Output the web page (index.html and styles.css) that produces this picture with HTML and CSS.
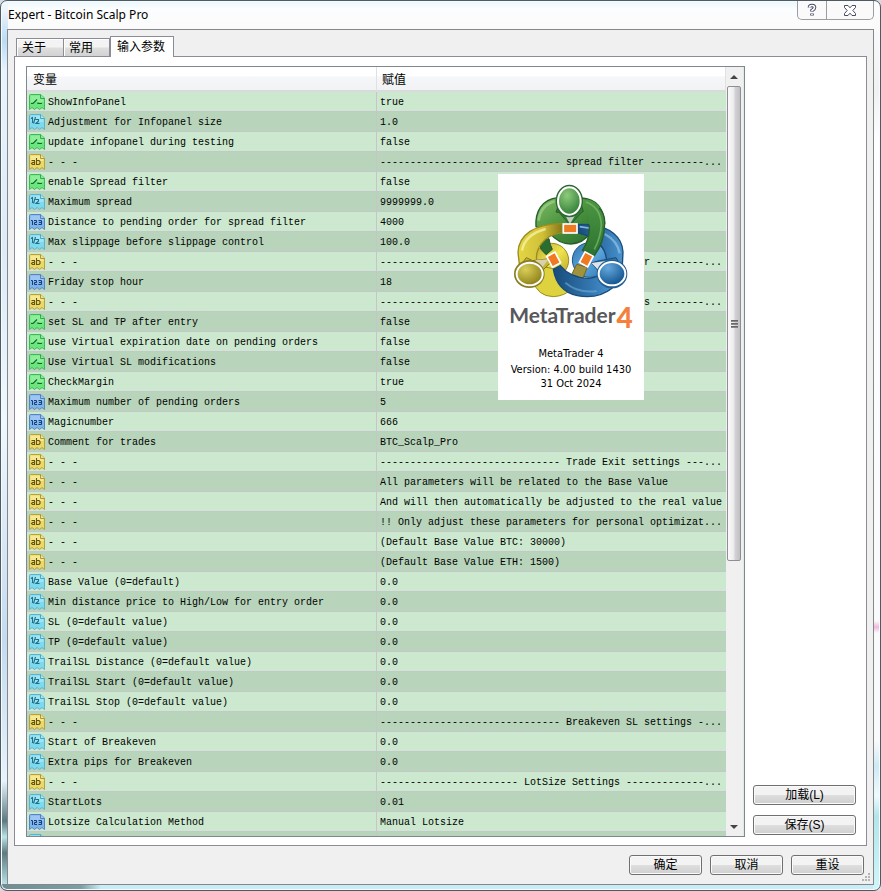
FILE: index.html
```html
<!DOCTYPE html>
<html lang="zh-CN">
<head>
<meta charset="utf-8">
<title>Expert - Bitcoin Scalp Pro</title>
<link rel="stylesheet" href="styles.css">
</head>
<body>
<svg class="sprites" width="0" height="0" aria-hidden="true">
  <symbol id="bool" viewBox="0 0 16 16">
    <path d="M.5 1.5q0-1 1-1H11.500L15.500 4V15.500L13 13.500 10.500 15.500 8 13.500 5.500 15.500 3 13.500 .5 15.500Z" fill="#6de57f" stroke="#3fb75a"/>
    <path d="M1.500 1.500H11L14.500 5V8H1.500Z" fill="#a5f5ac" opacity=".6"/>
    <path d="M11.500 .5V4.500H15.500" fill="#8ceb98" stroke="#35a64e"/>
    <path d="M2 9.500H4L8 5.500M9 8.500V9.500H13" fill="none" stroke="#14692a" stroke-width="1.200"/>
  </symbol>
  <symbol id="real" viewBox="0 0 16 16">
    <path d="M.5 1.500q0-1 1-1H11.500L15.500 4V15.500L13 13.500 10.500 15.500 8 13.500 5.500 15.500 3 13.500 .5 15.500Z" fill="#7fd9ec" stroke="#5bb2cd"/>
    <path d="M1.500 1.500H11L14.500 5V8H1.500Z" fill="#b4ecf7" opacity=".6"/>
    <path d="M11.500 .5V4.500H15.500" fill="#a4e6f2" stroke="#4ea5c4"/>
    <path d="M2 4.500L3.500 3.500V9M6.500 3L4.500 9.500M6.500 5.500H9.500V7L7 9.500H10.500" fill="none" stroke="#1d6f8c" stroke-width="1.100"/>
  </symbol>
  <symbol id="int" viewBox="0 0 16 16">
    <path d="M.5 1.500q0-1 1-1H11.500L15.500 4V15.500L13 13.500 10.500 15.500 8 13.500 5.500 15.500 3 13.500 .5 15.500Z" fill="#80b5ea" stroke="#5585c6"/>
    <path d="M1.500 1.500H11L14.500 5V7H1.500Z" fill="#b0d3f7" opacity=".6"/>
    <path d="M11.500 .5V4.500H15.500" fill="#a2c8f2" stroke="#4f7fc0"/>
    <path d="M2 6.500H3.500V11M5 6.500H7.500V8.500H5.500V10.500H8M9.500 6.500H12.500V10.500H9.500M10 8.500H12" fill="none" stroke="#173e7c"/>
  </symbol>
  <symbol id="str" viewBox="0 0 16 16">
    <path d="M.5 1.500q0-1 1-1H11.500L15.500 4V15.500L13 13.500 10.500 15.500 8 13.500 5.500 15.500 3 13.500 .5 15.500Z" fill="#ead968" stroke="#b9a03b"/>
    <path d="M1.500 1.500H11L14.500 5V7H1.500Z" fill="#faf0a8" opacity=".7"/>
    <path d="M11.500 .5V4.500H15.500" fill="#f3e690" stroke="#b0952f"/>
    <path d="M2.500 6.500H5.500V11M5.500 8.500H3.500L2.500 9.500 3.500 10.500H5.500M7.500 4V10.500H10L11 9.500V7.500L10 6.500H7.500" fill="none" stroke="#665512" stroke-width="1.100"/>
  </symbol>
</svg>

<div class="window">
  <header class="titlebar">
    <h1>Expert - Bitcoin Scalp Pro</h1>
    <div class="caption">
      <button class="help" aria-label="Help"><svg width="10" height="14" viewBox="0 0 10 14"><path d="M2.500 4.500Q2.500 2.500 5 2.500T7.500 4.500Q7.500 6 5 7.500V8.500M5 10.500V12.500" fill="none" stroke="#474b66" stroke-width="3.600"/><path d="M2.500 4.500Q2.500 2.500 5 2.500T7.500 4.500Q7.500 6 5 7.500V8M5 11V12" fill="none" stroke="#fff" stroke-width="1.600"/></svg></button>
      <button class="close" aria-label="Close"><svg width="12" height="11" viewBox="0 0 12 11"><path d="M.5 .5H4L6 2.800 8 .5H11.500V2.500L8.800 5.500 11.500 8.500V10.500H8L6 8.200 4 10.500H.5V8.500L3.200 5.500 .5 2.500Z" fill="#fff" stroke="#474b66"/></svg></button>
    </div>
  </header>

  <main class="client">
    <div class="tabs" role="tablist">
      <button class="tab" role="tab">关于</button>
      <button class="tab second" role="tab">常用</button>
      <button class="tab active" role="tab" aria-selected="true">输入参数</button>
    </div>

    <section class="panel">
      <div class="list">
        <div class="rows">
          <table>
            <colgroup><col class="name"><col></colgroup>
            <thead><tr><th>变量</th><th>赋值</th></tr></thead>
            <tbody>
              <tr><td><svg><use href="#bool"/></svg>ShowInfoPanel</td><td>true</td></tr>
              <tr><td><svg><use href="#real"/></svg>Adjustment for Infopanel size</td><td>1.0</td></tr>
              <tr><td><svg><use href="#bool"/></svg>update infopanel during testing</td><td>false</td></tr>
              <tr><td><svg><use href="#str"/></svg>- - -</td><td>------------------------------ spread filter ---------...</td></tr>
              <tr><td><svg><use href="#bool"/></svg>enable Spread filter</td><td>false</td></tr>
              <tr><td><svg><use href="#real"/></svg>Maximum spread</td><td>9999999.0</td></tr>
              <tr><td><svg><use href="#int"/></svg>Distance to pending order for spread filter</td><td>4000</td></tr>
              <tr><td><svg><use href="#real"/></svg>Max slippage before slippage control</td><td>100.0</td></tr>
              <tr><td><svg><use href="#str"/></svg>- - -</td><td><span>--------------------</span><span class="tail">r --------...</span></td></tr>
              <tr><td><svg><use href="#int"/></svg>Friday stop hour</td><td>18</td></tr>
              <tr><td><svg><use href="#str"/></svg>- - -</td><td><span>--------------------</span><span class="tail">s --------...</span></td></tr>
              <tr><td><svg><use href="#bool"/></svg>set SL and TP after entry</td><td>false</td></tr>
              <tr><td><svg><use href="#bool"/></svg>use Virtual expiration date on pending orders</td><td>false</td></tr>
              <tr><td><svg><use href="#bool"/></svg>Use Virtual SL modifications</td><td>false</td></tr>
              <tr><td><svg><use href="#bool"/></svg>CheckMargin</td><td>true</td></tr>
              <tr><td><svg><use href="#int"/></svg>Maximum number of pending orders</td><td>5</td></tr>
              <tr><td><svg><use href="#int"/></svg>Magicnumber</td><td>666</td></tr>
              <tr><td><svg><use href="#str"/></svg>Comment for trades</td><td>BTC_Scalp_Pro</td></tr>
              <tr><td><svg><use href="#str"/></svg>- - -</td><td>------------------------------ Trade Exit settings ---...</td></tr>
              <tr><td><svg><use href="#str"/></svg>- - -</td><td>All parameters will be related to the Base Value</td></tr>
              <tr><td><svg><use href="#str"/></svg>- - -</td><td>And will then automatically be adjusted to the real value</td></tr>
              <tr><td><svg><use href="#str"/></svg>- - -</td><td>!! Only adjust these parameters for personal optimizat...</td></tr>
              <tr><td><svg><use href="#str"/></svg>- - -</td><td>(Default Base Value BTC: 30000)</td></tr>
              <tr><td><svg><use href="#str"/></svg>- - -</td><td>(Default Base Value ETH: 1500)</td></tr>
              <tr><td><svg><use href="#real"/></svg>Base Value (0=default)</td><td>0.0</td></tr>
              <tr><td><svg><use href="#real"/></svg>Min distance price to High/Low for entry order</td><td>0.0</td></tr>
              <tr><td><svg><use href="#real"/></svg>SL (0=default value)</td><td>0.0</td></tr>
              <tr><td><svg><use href="#real"/></svg>TP (0=default value)</td><td>0.0</td></tr>
              <tr><td><svg><use href="#real"/></svg>TrailSL Distance (0=default value)</td><td>0.0</td></tr>
              <tr><td><svg><use href="#real"/></svg>TrailSL Start (0=default value)</td><td>0.0</td></tr>
              <tr><td><svg><use href="#real"/></svg>TrailSL Stop (0=default value)</td><td>0.0</td></tr>
              <tr><td><svg><use href="#str"/></svg>- - -</td><td>------------------------------ Breakeven SL settings -...</td></tr>
              <tr><td><svg><use href="#real"/></svg>Start of Breakeven</td><td>0.0</td></tr>
              <tr><td><svg><use href="#real"/></svg>Extra pips for Breakeven</td><td>0.0</td></tr>
              <tr><td><svg><use href="#str"/></svg>- - -</td><td>----------------------- LotSize Settings -------------...</td></tr>
              <tr><td><svg><use href="#real"/></svg>StartLots</td><td>0.01</td></tr>
              <tr><td><svg><use href="#int"/></svg>Lotsize Calculation Method</td><td>Manual Lotsize</td></tr>
              <tr><td><svg><use href="#real"/></svg></td><td></td></tr>
            </tbody>
          </table>
        </div>
        <div class="scrollbar">
          <span class="arrow up"></span>
          <div class="track"><div class="thumb"><i></i><i></i><i></i></div></div>
          <span class="arrow down"></span>
        </div>
      </div>
      <div class="side">
        <button class="btn">加载(L)</button>
        <button class="btn">保存(S)</button>
      </div>
    </section>

    <footer class="actions">
      <button class="btn">确定</button>
      <button class="btn">取消</button>
      <button class="btn">重设</button>
    </footer>
    <svg class="grip" width="10" height="10" viewBox="0 0 10 10" aria-hidden="true"><path d="M6 1h2M3 4h2M6 4h2M0 7h2M3 7h2M6 7h2" stroke="#b4b4b4" stroke-width="2"/></svg>
  </main>

  <aside class="about">
    <svg class="logo" width="125" height="125" viewBox="0 0 375 375" aria-hidden="true">
      <defs>
        <linearGradient id="g" x1="0" y1="0" x2="1" y2="1"><stop offset="0" stop-color="#82bd65"/><stop offset=".5" stop-color="#478f3d"/><stop offset="1" stop-color="#286a2d"/></linearGradient>
        <linearGradient id="y" x1="0" y1="0" x2="1" y2="1"><stop offset="0" stop-color="#b8a92c"/><stop offset=".5" stop-color="#efe350"/><stop offset="1" stop-color="#b8a622"/></linearGradient>
        <linearGradient id="b" x1="0" y1="0" x2="1" y2="1"><stop offset="0" stop-color="#2f74ae"/><stop offset=".5" stop-color="#5da6de"/><stop offset="1" stop-color="#2f74ae"/></linearGradient>
        <linearGradient id="ya" x1="0" y1="0" x2="1" y2="0"><stop offset="0" stop-color="#e3d745"/><stop offset=".55" stop-color="#d0c038"/><stop offset="1" stop-color="#857718"/></linearGradient>
        <linearGradient id="ba" x1="0" y1="0" x2="1" y2="0"><stop offset="0" stop-color="#174b7a"/><stop offset=".6" stop-color="#3275ae"/><stop offset="1" stop-color="#4a94cf"/></linearGradient>
        <linearGradient id="ga" x1="0" y1="0" x2="0" y2="1"><stop offset="0" stop-color="#4d9742"/><stop offset="1" stop-color="#2c7231"/></linearGradient>
        <radialGradient id="gh" cx=".4" cy=".3" r=".8"><stop offset="0" stop-color="#8ecb7b"/><stop offset="1" stop-color="#287630"/></radialGradient>
        <radialGradient id="yh" cx=".35" cy=".3" r=".8"><stop offset="0" stop-color="#d9cf59"/><stop offset="1" stop-color="#877812"/></radialGradient>
        <radialGradient id="bh" cx=".35" cy=".25" r=".8"><stop offset="0" stop-color="#65a8dc"/><stop offset="1" stop-color="#0e508b"/></radialGradient>
      </defs>
      <circle cx="125" cy="241" r="51" fill="url(#y)" stroke="#9c8c20" stroke-width="3"/>
      <path d="M68 300Q82 349 130 350 165 348 186 326L150 270 100 260Z" fill="#dfd23f" stroke="#9c8c20" stroke-width="3"/>
      <circle cx="239" cy="240" r="52" fill="url(#b)" stroke="#1b5587" stroke-width="3"/>
      <path d="M144 53C95 58 75 95 78 140L120 160Q145 191 182 192 220 190 240 160L284 130C280 80 255 57 215 54Z" fill="url(#g)" stroke="#255f2a" stroke-width="4"/>
      <path d="M88 180L93 208 108 224 127 208Q119 193 117 176Z" fill="#2a6d2f" stroke="#205726" stroke-width="3"/>
      <path d="M203 133L240 134C300 140 337 172 339 216L337 256 290 262Q294 212 262 186 240 166 206 159Z" fill="url(#ba)" stroke="#174b7a" stroke-width="4"/>
      <path d="M209 140L255 147" stroke="#87b4da" stroke-width="5"/>
      <path d="M284 162Q322 182 329 220" fill="none" stroke="#a1cbea" stroke-width="7" opacity=".6"/>
      <path d="M230 58C268 66 285 96 284 132 283 168 272 203 252 228L217 211Q242 175 237 128Z" fill="url(#ga)"/>
      <path d="M268 84Q286 104 284 132C283 168 272 203 252 228L217 211Q240 178 238 134" fill="none" stroke="#255f2a" stroke-width="4"/>
      <path d="M86 122Q90 78 134 64" fill="none" stroke="#a1d089" stroke-width="8" opacity=".7"/>
      <path d="M228 66Q272 82 274 135 272 172 253 208" fill="none" stroke="#8ac478" stroke-width="5" opacity=".6"/>
      <path d="M143 83L138 96 148 98 180 135 214 98 220 94 214 75Z" fill="#377d35" stroke="#255f2a" stroke-width="3"/>
      <path d="M165 105L180 132 196 105Z" fill="#c5cec6"/>
      <path d="M157 131C75 130 25 165 24 218L28 252 80 242C76 210 96 166 157 158Z" fill="url(#ya)" stroke="#9c8c20" stroke-width="4"/>
      <path d="M36 212Q44 164 107 147" fill="none" stroke="#fbf6ad" stroke-width="7" opacity=".7"/>
      <path d="M200 253L232 262 218 296 184 286Z" fill="#a1933d" stroke="#766719" stroke-width="3"/>
      <path d="M130 268L151 257Q181 294 235 295 265 292 279 280L307 324C275 350 235 353 202 347 156 337 136 303 130 268Z" fill="url(#ba)" stroke="#174b7a" stroke-width="4"/>
      <path d="M166 308Q205 341 260 333" fill="none" stroke="#77b3df" stroke-width="6" opacity=".55"/>
      <path d="M35 252L49 233 68 242 111 237 121 249 99 270Z" fill="#c5b735" stroke="#817117" stroke-width="3"/>
      <path d="M75 240L116 238 97 262Z" fill="#d8d1ab"/>
      <path d="M244 249L264 243 318 233 332 256 319 271 267 296 263 270Z" fill="#33759f" stroke="#174b7a" stroke-width="3"/>
      <path d="M244 249L288 243 263 268Z" fill="#dfe4ea"/>
      <g fill="#f07a22" stroke="#fff" stroke-width="5">
        <rect x="160" y="132" width="41" height="27"/>
        <rect x="-14" y="-18" width="28" height="36" transform="translate(131 239) rotate(-28)"/>
        <rect x="-14" y="-18" width="28" height="36" transform="translate(229 238) rotate(28)"/>
      </g>
      <g stroke-width="6">
        <ellipse cx="178" cy="63" rx="38" ry="46" fill="#33783a" stroke="#2c6830"/>
        <ellipse cx="178" cy="63" rx="34" ry="41" fill="url(#gh)" stroke="#fff"/>
        <ellipse cx="58" cy="282" rx="43" ry="39" fill="#9a8c26" stroke="#8a7c25"/>
        <ellipse cx="59" cy="282" rx="39" ry="34" fill="url(#yh)" stroke="#fff"/>
        <ellipse cx="306" cy="282" rx="43" ry="40" fill="#235d91" stroke="#235d91"/>
        <ellipse cx="306" cy="281" rx="40" ry="35" fill="url(#bh)" stroke="#fff"/>
      </g>
    </svg>
    <div class="brand">MetaTrader<b>4</b></div>
    <p class="product">MetaTrader 4</p>
    <p>Version: 4.00 build 1430</p>
    <p>31 Oct 2024</p>
  </aside>
</div>
</body>
</html>
```
FILE: styles.css
```css
* { box-sizing: border-box; }
body {
  margin: 0;
  background: #d5dde2;
  color: #000;
  font: 12px/16px "Liberation Sans", "Noto Sans CJK SC", sans-serif;
}
button { font: inherit; color: inherit; padding: 0; margin: 0; }
.sprites { position: absolute; }

.window {
  position: relative;
  display: flex;
  flex-direction: column;
  height: 100vh;
  min-height: 400px;
  padding: 0 6px 5px;
  border: 1px solid #505a63;
  border-radius: 7px;
  box-shadow: inset 0 0 0 1px #f4fbff;
  background:
    linear-gradient(90deg, #6d8d91 0, #7d9ea2 80px, transparent 100px) 0 100% / 100% 6px no-repeat,
    linear-gradient(#b9dcf500 0, #b9dcf5 40px, #e8f4fd 70px, #dcebf8 250px, #eef8fe 420px, #c5daf0 640px, #e5f4fc 780px, #5c7a80 820px, #b9e5e9 836px, #5c7a80 852px, #c9f5f9 100%) 0 0 / 7px 100% no-repeat,
    linear-gradient(#fdfdfd 0, #f1f1f1 90px, #fcfeff 140px, #fafafa 620px, #f0b8dc 626px, #fafafa 632px, #fafafa 740px, #cdeaf4 765px, #eefbff 795px, #b2e5ea 815px, #d0f7fa 100%) 100% 0 / 7px 100% no-repeat,
    linear-gradient(#eaf7fd 0, #fcfdfe 8px, #fafafa 32px, #fafafa 80%, #c8edf7 100%);
}
.titlebar { display: flex; justify-content: space-between; height: 28px; }
.titlebar h1 {
  margin: 6px 0 0 1px;
  font: 12px/16px "Noto Sans", sans-serif;
}
.caption {
  display: flex;
  height: 19px;
  border: 1px solid #9a9da1;
  border-top: 0;
  border-radius: 0 0 5px 5px;
  background: #fafafa;
}
.caption button {
  display: flex;
  align-items: center;
  justify-content: center;
  border: 0;
  background: none;
}
.help { width: 28px; }
.caption .close { width: 47px; border-left: 1px solid #9a9da1; }

.client {
  position: relative;
  flex: 1;
  min-height: 0;
  display: flex;
  flex-direction: column;
  padding: 6px 6px 9px;
  border: 1px solid #84888c;
  background: #f0f0f0;
}
.tabs { display: flex; align-items: flex-end; padding-left: 2px; }
.tab {
  height: 18px;
  width: 48px;
  padding-left: 5px;
  border: 1px solid #8b8c96;
  border-bottom: 0;
  background: linear-gradient(#f3f3f3 45%, #dedede 55%, #d2d2d2);
  box-shadow: inset 1px 1px #fff;
  text-align: left;
  line-height: 18px;
}
.tab.second { width: 46px; border-left: 0; }
.tab.active {
  position: relative;
  height: 21px;
  width: 64px;
  margin-bottom: -1px;
  padding-left: 6px;
  background: #fff;
  line-height: 18px;
}
.panel {
  flex: 1;
  min-height: 0;
  display: flex;
  gap: 8px;
  padding: 9px 10px 8px 11px;
  border: 1px solid #8b8c96;
  background: #fff;
}
.list {
  flex: 1;
  min-width: 0;
  display: flex;
  border: 1px solid #7f8790;
  background: #cce8cf;
}
.rows { flex: 1; min-width: 0; overflow: hidden; }
table { width: 100%; table-layout: fixed; border-collapse: separate; border-spacing: 0; }
.name { width: 350px; }
th {
  height: 25px;
  padding: 3px 6px 0;
  border-right: 1px solid #dfe1e4;
  border-bottom: 2px solid #d9dadc;
  background: linear-gradient(#fff 40%, #f6f7f9 42%, #f1f2f4);
  font-weight: 400;
  text-align: left;
}
th:last-child { padding-left: 5px; }
td {
  height: 20px;
  padding: 2px 0 0 2px;
  border-bottom: 1px solid #c5c8ca;
  background: #cce8cf;
  font: 10px/17px "Liberation Mono", monospace;
  white-space: pre;
  overflow: hidden;
}
td:first-child { border-right: 1px solid #c8c5ca; }
td:last-child { padding-left: 3px; }
tr:nth-child(even) td { background: #b8d4bb; }
td svg { width: 16px; height: 16px; margin-right: 3px; vertical-align: top; }
.tail { margin-left: 144px; }

.scrollbar {
  display: flex;
  flex-direction: column;
  width: 18px;
  padding: 0 2px 0 1px;
  border-right: 1px solid #dceee0;
  background: #f0f0f0;
}
.arrow { display: flex; height: 19px; align-items: center; justify-content: center; }
.arrow::after { content: ""; border: 4px solid transparent; }
.up::after { border-top: 0; border-bottom-color: #444; }
.down::after { border-bottom: 0; border-top-color: #444; }
.track { flex: 1; }
.thumb {
  display: flex;
  flex-direction: column;
  align-items: center;
  justify-content: center;
  gap: 1px;
  height: 65%;
  border: 1px solid #8e8e93;
  border-radius: 2px;
  background: linear-gradient(90deg, #fafafa, #ededed 45%, #d2d2d6 60%, #bfbfc4);
}
.thumb i { width: 7px; height: 2px; background: linear-gradient(#555, #999); }

.side {
  display: flex;
  flex-direction: column;
  justify-content: flex-end;
  gap: 10px;
  width: 103px;
  padding-bottom: 2px;
}
.btn {
  height: 20px;
  border: 1px solid #707070;
  border-radius: 3px;
  background: linear-gradient(#f3f3f3 48%, #dedede 52%, #cfcfcf);
  box-shadow: inset 0 0 0 1px #fafafa;
  line-height: 17px;
}
.actions { display: flex; justify-content: flex-end; gap: 8px; padding: 9px 3px 0 0; }
.actions .btn { width: 73px; }
.grip { position: absolute; right: 1px; bottom: 1px; }

.about {
  position: absolute;
  left: 497px;
  top: 173px;
  width: 146px;
  height: 226px;
  background: #fff;
  text-align: center;
  font: 11px/14px "DejaVu Sans Condensed", "DejaVu Sans", sans-serif;
}
.logo { display: block; margin: 6px 0 0 12px; }
.brand {
  display: flex;
  justify-content: center;
  gap: 1px;
  height: 28px;
  color: #58585a;
  font: 700 21px/20px Lato, sans-serif;
}
.brand b { color: #f5803e; font-weight: 900; font-size: 28px; line-height: 24px; }
.about p { margin: 0; }
.about .product { margin: 14px 0 2px; }
```
